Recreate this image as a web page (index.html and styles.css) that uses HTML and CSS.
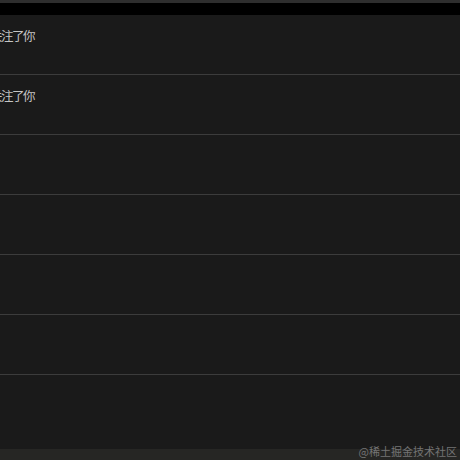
FILE: index.html
```html
<!DOCTYPE html>
<html lang="zh-CN">
<head>
    <meta charset="UTF-8">
    <meta name="viewport" content="width=device-width, initial-scale=1.0">
    <title>消息通知</title>
    <link rel="stylesheet" href="styles.css">
</head>
<body>
    <div class="screen">
        <div class="top-edge"></div>
        <div class="status-bar"></div>

        <ul class="notice-list">
            <li class="notice-item"><span class="notice-text">关注了你</span></li>
            <li class="notice-item"><span class="notice-text">关注了你</span></li>
            <li class="notice-item"></li>
            <li class="notice-item"></li>
            <li class="notice-item"></li>
            <li class="notice-item"></li>
            <li class="notice-item last"></li>
        </ul>

        <div class="bottom-band"></div>
        <div class="watermark">@稀土掘金技术社区</div>
    </div>
</body>
</html>
```

FILE: styles.css
```css
* {
    margin: 0;
    padding: 0;
    box-sizing: border-box;
}

body {
    font-family: "Noto Sans CJK SC", "Noto Sans", sans-serif;
    background: #1a1a1a;
}

.screen {
    position: relative;
    width: 460px;
    height: 460px;
    overflow: hidden;
    display: flex;
    flex-direction: column;
    background: #1a1a1a;
}

.top-edge {
    height: 3px;
    background: #2e2e2e;
}

.status-bar {
    height: 12px;
    background: #000;
}

.notice-list {
    list-style: none;
    flex: 1;
    display: flex;
    flex-direction: column;
}

.notice-item {
    height: 60px;
    border-bottom: 1px solid #3c3c3c;
    padding-top: 12px;
}

.notice-item.last {
    flex: 1;
    border-bottom: none;
}

.notice-text {
    display: block;
    margin-left: -10px;
    font-size: 12.5px;
    letter-spacing: -1.5px;
    line-height: 18px;
    color: #c4c4c4;
}

.bottom-band {
    height: 11px;
    background: #262624;
}

.watermark {
    position: absolute;
    right: 3px;
    bottom: 2px;
    font-size: 11px;
    line-height: 14px;
    color: #747474;
}
```
